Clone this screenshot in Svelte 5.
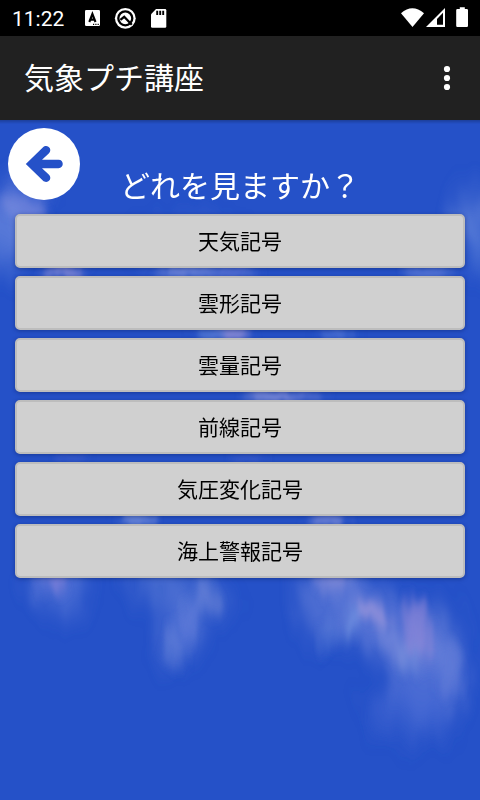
<script>
  const items = ['天気記号', '雲形記号', '雲量記号', '前線記号', '気圧変化記号', '海上警報記号'];

  // cx, cy, rx, ry, rotation, colour, opacity
  const haze = [
    [16, 214, 32, 34, 0, '#7f93e2', 0.45],
    [4, 240, 22, 32, 0, '#6f8fe0', 0.45],
    [472, 220, 20, 26, 0, '#7f9ae0', 0.45],
    [478, 248, 18, 26, 0, '#5f84dc', 0.45],
    [190, 250, 60, 30, 0, '#5577da', 0.3],
    [58, 585, 30, 28, 0, '#6f87dd', 0.45],
    [180, 590, 50, 24, 15, '#6a88da', 0.45],
    [180, 630, 22, 36, 8, '#6a86dc', 0.45],
    [330, 600, 32, 42, 10, '#7088dc', 0.5],
    [390, 630, 65, 28, 38, '#7589dd', 0.55],
    [430, 675, 38, 42, 10, '#5f7bd8', 0.6],
    [410, 715, 46, 22, 10, '#4a6bd5', 0.5],
    [445, 640, 18, 42, -22, '#7488da', 0.4]
  ];

  const wisps = [
    [24, 208, 24, 11, 20, '#8e96e2', 0.4],
    [66, 271, 20, 10, 0, '#9a97dc', 0.7],
    [185, 271, 28, 10, 0, '#8b99e0', 0.65],
    [235, 273, 24, 8, 0, '#7c8add', 0.5],
    [428, 271, 24, 10, 0, '#6f8be0', 0.6],
    [232, 333, 18, 9, 0, '#a69bdc', 0.8],
    [208, 333, 14, 8, 0, '#6e93df', 0.6],
    [338, 334, 18, 8, 0, '#6687df', 0.6],
    [272, 396, 28, 9, 0, '#949bdd', 0.75],
    [306, 396, 18, 8, 0, '#7a88dc', 0.5],
    [72, 458, 18, 4, 0, '#5a6bd4', 0.5],
    [248, 458, 20, 4, 0, '#5a6bd4', 0.5],
    [138, 520, 20, 9, 0, '#819ae0', 0.75],
    [326, 520, 22, 9, 0, '#929be0', 0.65],
    [55, 580, 12, 14, 0, '#9389da', 0.55],
    [208, 598, 9, 20, -30, '#8393dc', 0.4],
    [191, 620, 5, 24, 8, '#7f90e2', 0.45],
    [173, 645, 8, 22, -10, '#7b91e0', 0.35],
    [334, 580, 16, 12, 0, '#a09bdc', 0.5],
    [353, 622, 6, 20, 20, '#83a4e8', 0.55],
    [374, 612, 19, 8, 35, '#a99edd', 0.7],
    [392, 645, 8, 26, -35, '#8794dd', 0.5],
    [418, 628, 15, 30, -8, '#9a8cd8', 0.6],
    [407, 658, 10, 16, 0, '#819bdf', 0.4],
    [328, 635, 8, 18, 0, '#7696e2', 0.3],
    [448, 668, 14, 30, 0, '#7087dc', 0.35]
  ];
</script>

<div class="screen">
  <header>
    <div class="status">
      <span class="time">11:22</span>
      <svg class="notices" width="84" height="24" viewBox="84 6 84 24">
        <rect x="85" y="10" width="15" height="16" rx="1.2" fill="#fff" />
        <path d="M89.3 22l3.1-8 3.1 8M90.6 19.6h3.6" fill="none" stroke="#000" stroke-width="2.1" />
        <path d="M93 24.4h1.2M95.3 24.4h1.2M97.6 24.4h1.2" stroke="#000" stroke-width="1.2" />
        <circle cx="125.3" cy="18.3" r="10.4" fill="#fff" />
        <circle cx="125.3" cy="18.3" r="7" fill="none" stroke="#000" stroke-width="2.3" />
        <path d="M120.4 19.8l3.8-3 7.6 7.9" fill="none" stroke="#000" stroke-width="2.3" />
        <path d="M156 9h9q1.3 0 1.3 1.3v16.2q0 1.3-1.3 1.3h-12.7q-1.3 0-1.3-1.3V14.3z" fill="#fff" />
        <path d="M157.2 10.8v4.2M160.2 10.8v4.2M163.2 10.8v4.2" stroke="#000" stroke-width="1.9" />
      </svg>
      <svg class="signals" width="70" height="24" viewBox="400 6 70 24" fill="#fff">
        <path d="M401 13.2Q412.3 3.2 424 13.2L412.5 27z" />
        <path d="M426 27L445 8v19z" />
        <path d="M437 19l6-6.2v12h-6z" fill="#000" />
        <path d="M459.8 9V7.2h5V9h2q1.2 0 1.2 1.2v15.6q0 1.2-1.2 1.2h-9.4q-1.2 0-1.2-1.2V10.2q0-1.2 1.2-1.2z" />
      </svg>
    </div>
    <div class="bar">
      <h1>気象プチ講座</h1>
      <button class="more" aria-label="menu">
        <svg width="8" height="26" viewBox="0 0 8 26" fill="#fff">
          <circle cx="4" cy="4" r="3.1" />
          <circle cx="4" cy="13" r="3.1" />
          <circle cx="4" cy="22" r="3.1" />
        </svg>
      </button>
    </div>
  </header>

  <main>
    <svg class="sky" viewBox="0 120 480 680" aria-hidden="true">
      <defs>
        <filter id="soft" x="-20%" y="-20%" width="140%" height="140%">
          <feGaussianBlur stdDeviation="8 11" result="b" />
          <feTurbulence type="fractalNoise" baseFrequency="0.05 0.02" numOctaves="2" seed="4" result="n" />
          <feDisplacementMap in="b" in2="n" scale="30" xChannelSelector="R" yChannelSelector="G" />
          <feGaussianBlur stdDeviation="2 4" />
        </filter>
        <filter id="fine" x="-20%" y="-20%" width="140%" height="140%">
          <feGaussianBlur stdDeviation="5 6" result="b" />
          <feTurbulence type="fractalNoise" baseFrequency="0.07 0.02" numOctaves="2" seed="9" result="n" />
          <feDisplacementMap in="b" in2="n" scale="20" xChannelSelector="R" yChannelSelector="G" />
          <feGaussianBlur stdDeviation="1 2" />
        </filter>
        <linearGradient id="shade" x2="0" y2="1">
          <stop offset="0" stop-opacity="0.22" />
          <stop offset="1" stop-opacity="0" />
        </linearGradient>
      </defs>
      <g filter="url(#soft)">
        {#each haze as [cx, cy, rx, ry, r, fill, opacity]}
          <ellipse {cx} {cy} {rx} {ry} {fill} {opacity} transform="rotate({r} {cx} {cy})" />
        {/each}
      </g>
      <g filter="url(#fine)">
        {#each wisps as [cx, cy, rx, ry, r, fill, opacity]}
          <ellipse {cx} {cy} {rx} {ry} {fill} {opacity} transform="rotate({r} {cx} {cy})" />
        {/each}
      </g>
      <rect y="120" width="480" height="4" fill="url(#shade)" />
    </svg>

    <div class="content">
      <div class="top">
        <button class="back" aria-label="back">
          <svg width="72" height="72" viewBox="0 0 72 72">
            <circle cx="36" cy="36" r="36" fill="#fff" />
            <path
              d="M17.8 36L34.8 19.4C39 15.4 45 20.6 41 25.2L34 31.8H50.5C56.2 31.8 56.2 40.2 50.5 40.2H34L41 46.8C45 51.4 39 56.6 34.8 52.6Z"
              fill="#2551c8"
            />
          </svg>
        </button>
        <h2>どれを見ますか？</h2>
      </div>
      <nav>
        {#each items as item}
          <button class="item">{item}</button>
        {/each}
      </nav>
    </div>
  </main>
</div>

<style>
  :global(body) {
    margin: 0;
    background: #2551c8;
  }

  .screen {
    display: flex;
    flex-direction: column;
    width: 480px;
    height: 800px;
    overflow: hidden;
    font-family: 'Noto Sans CJK JP', sans-serif;
  }

  .status {
    display: flex;
    align-items: center;
    box-sizing: border-box;
    height: 36px;
    padding: 0 10px 0 12px;
    background: #000;
    color: #fff;
  }

  .time {
    width: 72px;
    font: 21px/36px Roboto, sans-serif;
    padding-top: 2px;
  }

  .signals {
    margin-left: auto;
  }

  .bar {
    display: flex;
    align-items: center;
    justify-content: space-between;
    height: 84px;
    padding: 0 29px 0 24px;
    background: #212121;
  }

  h1, h2 {
    margin: 0;
    font-size: 30px;
    font-weight: 400;
    line-height: 44px;
    color: #fff;
  }

  h1 {
    padding-bottom: 4px;
  }

  button {
    border: none;
    padding: 0;
    background: none;
    font-family: inherit;
  }

  .more svg, .back svg {
    display: block;
  }

  main {
    display: grid;
    flex: 1;
    background: #2551c8;
  }

  .sky, .content {
    grid-area: 1 / 1;
    width: 480px;
    height: 680px;
  }

  .content {
    position: relative;
  }

  .top {
    display: grid;
    grid-template-columns: 72px 1fr 72px;
    height: 86px;
    padding: 8px 8px 0;
    box-sizing: border-box;
  }

  .back {
    width: 72px;
    height: 72px;
  }

  h2 {
    margin-top: 34px;
    text-align: center;
    white-space: nowrap;
  }

  nav {
    display: flex;
    flex-direction: column;
    gap: 8px;
    padding: 8px 15px;
  }

  .item {
    height: 54px;
    border: 2px solid #bdbdbd;
    border-radius: 5px;
    padding-bottom: 2px;
    background: #d0d0d0;
    box-shadow: 0 1px 4px rgba(0, 20, 80, 0.4);
    color: #000;
    font-size: 21px;
    line-height: 30px;
  }
</style>
